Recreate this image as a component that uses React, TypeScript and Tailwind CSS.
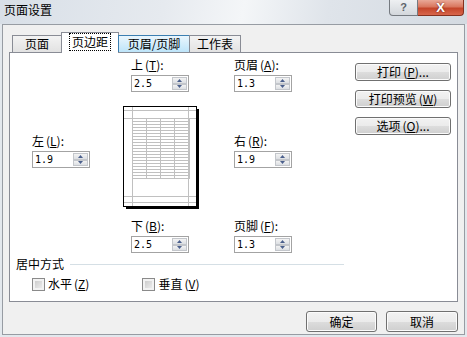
import React from "react";

const cjk = "font-['Noto_Sans_CJK_SC',sans-serif]";

function Key({ k }: { k: string }) {
  return (
    <span className="ml-[2px]">
      (<u>{k}</u>)
    </span>
  );
}

function Label({ children }: { children: React.ReactNode }) {
  return <div className="h-[14px] whitespace-nowrap text-[12px] leading-[14px] text-black">{children}</div>;
}

function SpinArrow({ up }: { up?: boolean }) {
  return (
    <div className="flex flex-1 items-center justify-center border border-[#c3c6cb] bg-[linear-gradient(#f3f3f3,#dcdfe3)]">
      <svg width="5" height="3" viewBox="0 0 5 3">
        {up ? <path d="M2.5 0L5 3H0Z" fill="#4a5f8c" /> : <path d="M0 0H5L2.5 3Z" fill="#4a5f8c" />}
      </svg>
    </div>
  );
}

function Spin({ value, className }: { value: string; className?: string }) {
  return (
    <div className={"flex h-[17px] w-[58px] border border-[#a3a3a3] bg-white " + (className ?? "")}>
      <span className="flex-1 pl-[2px] font-['DejaVu_Sans_Mono',monospace] text-[10px] leading-[15px] text-black">
        {value}
      </span>
      <div className="my-px mr-px flex w-[15px] flex-col">
        <SpinArrow up />
        <SpinArrow />
      </div>
    </div>
  );
}

function Btn({ children, className }: { children: React.ReactNode; className?: string }) {
  return (
    <div
      className={
        "flex items-center justify-center rounded-[3px] border border-[#707070] bg-[linear-gradient(#f2f2f2_0%,#ebebeb_50%,#dddddd_51%,#cfcfcf_100%)] text-[12px] text-black shadow-[inset_0_0_0_1px_#fbfbfb] " +
        (className ?? "")
      }
    >
      {children}
    </div>
  );
}

function Check({ children }: { children: React.ReactNode }) {
  return (
    <div className="flex items-center gap-[3px]">
      <div className="size-[13px] border border-[#8a8a8a] bg-[linear-gradient(135deg,#c4c4c4,#f4f4f4)] shadow-[inset_0_0_0_2px_#f2f2f2]" />
      <span className="text-[12px] leading-[14px] text-black">{children}</span>
    </div>
  );
}

function PagePreview() {
  const rows = Array.from({ length: 21 }, (_, i) => 12 + i * 3);
  return (
    <svg width="76" height="103" viewBox="0 0 76 103" shapeRendering="crispEdges">
      <rect x="3" y="3" width="73" height="100" fill="#000" />
      <rect x="0.5" y="0.5" width="73" height="100" fill="#fff" stroke="#000" />
      <g stroke="#c0c0c0">
        <line x1="9.5" y1="1" x2="9.5" y2="100" />
        <line x1="65.5" y1="1" x2="65.5" y2="100" />
        <line x1="1" y1="4.5" x2="73" y2="4.5" />
        <line x1="1" y1="12.5" x2="73" y2="12.5" />
        <line x1="1" y1="90.5" x2="73" y2="90.5" />
        <line x1="1" y1="96.5" x2="73" y2="96.5" />
        {rows.map((y) => (
          <line key={y} x1="9" y1={y + 0.5} x2="66" y2={y + 0.5} />
        ))}
        {[23.5, 37.5, 51.5, 66.5].map((x) => (
          <line key={x} x1={x} y1="12" x2={x} y2="73" />
        ))}
      </g>
    </svg>
  );
}

export default function App() {
  return (
    <div className={"flex h-[337px] w-[467px] flex-col bg-[#e3e8ed] " + cjk}>
      {/* title bar */}
      <div className="flex h-[24px] justify-between bg-[linear-gradient(100deg,#d8dfe7_0%,#e6eaef_35%,#f4f6f8_52%,#dfe4ea_70%,#d4dae1_100%)]">
        <span className="pl-[4px] pt-[3px] text-[12px] leading-[14px] text-black">页面设置</span>
        <div className="mr-[3px] flex h-[16px]">
          <div className="flex w-[29px] items-center justify-center rounded-bl-[4px] border border-t-0 border-[#757a80] bg-[linear-gradient(#eef0f2,#d3d7dc)] font-['Liberation_Sans',sans-serif] text-[11px] font-bold text-[#5e636a]">
            ?
          </div>
          <div className="flex w-[46px] items-center justify-center rounded-br-[4px] border border-l-0 border-t-0 border-[#85311f] bg-[linear-gradient(#e9a897_0%,#d9775f_45%,#c4452a_55%,#d8664c_100%)] font-['Liberation_Sans',sans-serif] text-[13px] font-bold leading-none text-white [text-shadow:0_0_2px_#5a1a10]">
            X
          </div>
        </div>
      </div>

      {/* body */}
      <div className="mx-[2px] flex h-[311px] flex-col border border-[#979ca3] bg-[#f0f0f0] px-[6px]">
        {/* tabs */}
        <div className="relative z-10 -mb-px mt-[7px] flex h-[21px] items-end pl-[3px] text-[12px] text-black">
          <div className="mb-px flex h-[17px] w-[50px] items-center justify-center border border-b-0 border-[#898c95] bg-[linear-gradient(#f3f3f3,#e2e2e2)]">
            页面
          </div>
          <div className="-ml-px flex h-[21px] w-[58px] items-start justify-center border border-b-0 border-[#898c95] bg-white pt-[1px]">
            <span className="px-[2px] leading-[16px] outline outline-1 outline-dotted outline-black">页边距</span>
          </div>
          <div className="-ml-px mb-px flex h-[17px] w-[72px] items-center justify-center border border-b-0 border-[#3c7fb1] bg-[linear-gradient(#eaf6fd,#bde4f9)]">
            页眉/页脚
          </div>
          <div className="-ml-px mb-px flex h-[17px] w-[52px] items-center justify-center border border-b-0 border-[#898c95] bg-[linear-gradient(#f3f3f3,#e2e2e2)]">
            工作表
          </div>
        </div>

        {/* panel */}
        <div className="flex h-[250px] flex-col border border-[#898c95] bg-white">
          <div className="flex h-[201px] pl-[22px]">
            <div className="flex w-[57px] flex-col">
              <div className="mt-[81px]">
                <Label>
                  左<Key k="L" />:
                </Label>
              </div>
              <Spin value="1.9" className="mt-[3px] w-[57px]" />
            </div>

            <div className="ml-[34px] flex w-[76px] flex-col">
              <div className="ml-[8px] mt-[5px]">
                <Label>
                  上<Key k="T" />:
                </Label>
              </div>
              <Spin value="2.5" className="ml-[8px] mt-[3px]" />
              <div className="mt-[14px]">
                <PagePreview />
              </div>
              <div className="ml-[8px] mt-[10px]">
                <Label>
                  下<Key k="B" />:
                </Label>
              </div>
              <Spin value="2.5" className="ml-[8px] mt-[3px]" />
            </div>

            <div className="ml-[35px] flex w-[58px] flex-col">
              <div className="mt-[5px]">
                <Label>
                  页眉<Key k="A" />:
                </Label>
              </div>
              <Spin value="1.3" className="mt-[3px]" />
              <div className="mt-[42px]">
                <Label>
                  右<Key k="R" />:
                </Label>
              </div>
              <Spin value="1.9" className="mt-[3px]" />
              <div className="mt-[51px]">
                <Label>
                  页脚<Key k="F" />:
                </Label>
              </div>
              <Spin value="1.3" className="mt-[3px]" />
            </div>

            <div className="ml-[63px] flex w-[96px] flex-col gap-[9px] pt-[10px]">
              <Btn className="h-[18px]">
                打印<Key k="P" />...
              </Btn>
              <Btn className="h-[18px]">
                打印预览<Key k="W" />
              </Btn>
              <Btn className="h-[18px]">
                选项<Key k="O" />...
              </Btn>
            </div>
          </div>

          <div className="mt-[3px] flex h-[14px] items-center pl-[6px]">
            <span className="text-[12px] leading-[14px] text-black">居中方式</span>
            <div className="ml-[6px] h-px w-[274px] bg-[#d5dfe5]" />
          </div>
          <div className="mt-[6px] flex pl-[22px]">
            <Check>
              水平<Key k="Z" />
            </Check>
            <div className="ml-[53px]">
              <Check>
                垂直<Key k="V" />
              </Check>
            </div>
          </div>
        </div>

        {/* dialog buttons */}
        <div className="mt-[9px] flex justify-end gap-[9px]">
          <Btn className="h-[21px] w-[71px] border-[#3c7fb1] shadow-[inset_0_0_0_1px_#59c7f2]">确定</Btn>
          <Btn className="h-[21px] w-[72px]">取消</Btn>
        </div>
      </div>
    </div>
  );
}
